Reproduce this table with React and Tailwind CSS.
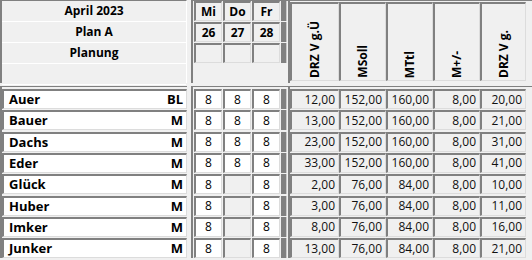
import React from "react";

const SUNK =
  "border-t-2 border-l-2 border-r border-b border-t-[#808080] border-l-[#808080] border-r-[#dcdcdc] border-b-[#dcdcdc]";

const rows = [
  ["Auer", "BL", ["8", "8", "8"], ["12,00", "152,00", "160,00", "8,00", "20,00"]],
  ["Bauer", "M", ["8", "8", "8"], ["13,00", "152,00", "160,00", "8,00", "21,00"]],
  ["Dachs", "M", ["8", "8", "8"], ["23,00", "152,00", "160,00", "8,00", "31,00"]],
  ["Eder", "M", ["8", "8", "8"], ["33,00", "152,00", "160,00", "8,00", "41,00"]],
  ["Glück", "M", ["8", "", "8"], ["2,00", "76,00", "84,00", "8,00", "10,00"]],
  ["Huber", "M", ["8", "", "8"], ["3,00", "76,00", "84,00", "8,00", "11,00"]],
  ["Imker", "M", ["8", "", "8"], ["8,00", "76,00", "84,00", "8,00", "16,00"]],
  ["Junker", "M", ["8", "", "8"], ["13,00", "76,00", "84,00", "8,00", "21,00"]],
];

const colW = ["w-[49px]", "w-[47px]", "w-[47px]", "w-[47px]", "w-[46px]"];
const heads = ["DRZ V g.Ü", "MSoll", "MTtl", "M+/-", "DRZ V g."];

function Strip() {
  return <div className="w-[6px] h-full bg-[#808080] border-r border-r-[#c8c8c8]" />;
}

export default function App() {
  return (
    <div className="w-[532px] h-[260px] overflow-hidden bg-[#f0f0f0] text-black font-['Open_Sans',sans-serif]">
      {/* header */}
      <div className="flex h-[83px]">
        <div className="w-[187px] h-[83px] border-l-2 border-t border-r border-l-[#808080] border-t-[#808080] border-r-white flex flex-col">
          {["April 2023", "Plan A", "Planung", ""].map((t, i) => (
            <div
              key={i}
              className="h-[21px] shrink-0 border-b border-white flex items-center justify-center font-bold text-[12px] leading-none"
            >
              {t}
            </div>
          ))}
        </div>
        <div className="ml-[4px] w-[97px] h-[83px] border-l-2 border-t border-l-[#808080] border-t-[#808080] pl-px flex flex-col gap-px">
          {[["Mi", "Do", "Fr"], ["26", "27", "28"], ["", "", ""]].map((r, i) => (
            <div key={i} className="flex h-[20px] gap-px">
              {r.map((c, j) => (
                <div
                  key={j}
                  className={`${SUNK} w-[28px] h-[20px] bg-[#f0f0f0] flex items-center justify-center font-bold text-[12px] leading-none`}
                >
                  {c}
                </div>
              ))}
              <Strip />
            </div>
          ))}
        </div>
        <div className="w-[244px] h-[83px] border-l-2 border-t border-l-[#808080] border-t-[#808080] pt-px flex">
          {heads.map((h, i) => (
            <div
              key={i}
              className={`${SUNK} ${colW[i]} h-[79px] bg-[#f0f0f0] flex items-end justify-center pb-[2px]`}
            >
              <span className="[writing-mode:vertical-rl] rotate-180 font-bold text-[12px] leading-none">
                {h}
              </span>
            </div>
          ))}
        </div>
      </div>

      {/* data */}
      <div className="mt-[3px] flex">
        <div className="w-[187px] border-l-2 border-t border-l-[#808080] border-t-[#808080] pt-[2px] flex flex-col gap-[1.34px]">
          {rows.map(([n, c], i) => (
            <div
              key={i}
              className={`${SUNK} w-[185px] h-[20px] shrink-0 bg-white flex items-center justify-between pl-[5px] pr-[3px] font-bold text-[13px] leading-none`}
            >
              <span>{n}</span>
              <span>{c}</span>
            </div>
          ))}
        </div>
        <div className="ml-[4px] w-[97px] border-l-2 border-t border-l-[#808080] border-t-[#808080] pl-px pt-[2px] flex flex-col gap-[1.34px]">
          {rows.map(([, , d], i) => (
            <div key={i} className="flex h-[20px] shrink-0 gap-px">
              {d.map((v, j) => (
                <div
                  key={j}
                  className={`${SUNK} w-[28px] h-[20px] ${v ? "bg-white" : "bg-[#f0f0f0]"} flex items-center justify-center text-[12px] leading-none`}
                >
                  {v}
                </div>
              ))}
              <Strip />
            </div>
          ))}
        </div>
        <div className="w-[244px] border-l-2 border-t border-l-[#808080] border-t-[#808080] pt-[2px] flex flex-col gap-[1.34px]">
          {rows.map(([, , , vals], i) => (
            <div key={i} className="flex h-[20px] shrink-0">
              {vals.map((v, j) => (
                <div
                  key={j}
                  className={`${SUNK} ${colW[j]} h-[20px] bg-[#f0f0f0] flex items-center justify-end pr-[3px] text-[12px] leading-none text-[#111]`}
                >
                  {v}
                </div>
              ))}
            </div>
          ))}
        </div>
      </div>
    </div>
  );
}
